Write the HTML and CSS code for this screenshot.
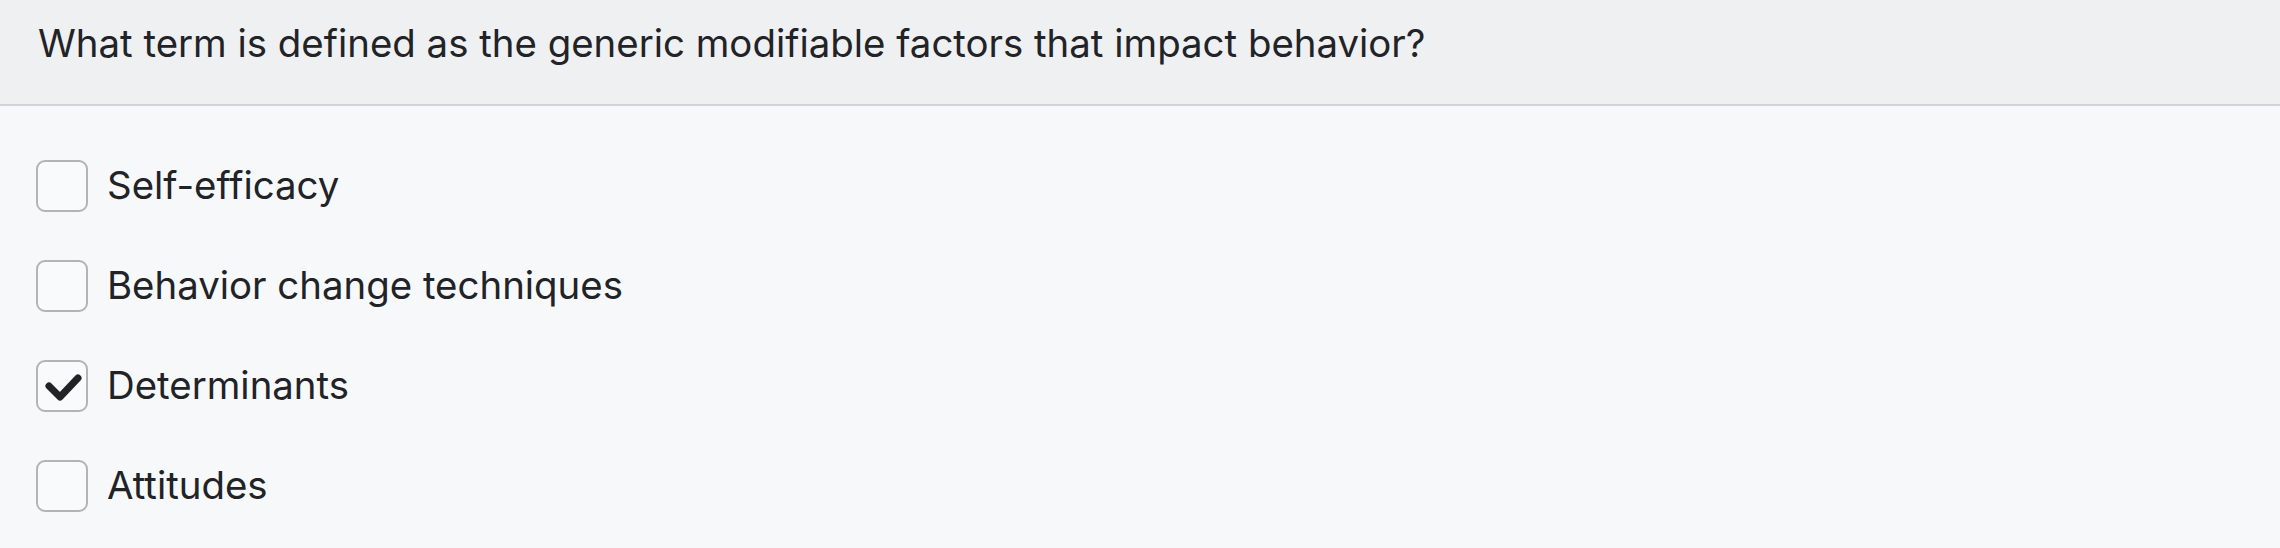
FILE: index.html
```html
<!DOCTYPE html>
<html lang="en">
<head>
<meta charset="utf-8">
<title>Question</title>
<link rel="stylesheet" href="styles.css">
</head>
<body>
<div class="question">
  <div class="question-header">What term is defined as the generic modifiable factors that impact behavior?</div>
  <ul class="options">
    <li class="option"><span class="box"></span><span class="label">Self-efficacy</span></li>
    <li class="option"><span class="box"></span><span class="label">Behavior change techniques</span></li>
    <li class="option"><span class="box checked"><svg viewBox="0 0 52 52" width="52" height="52"><path d="M13 26 L24 37 L42 18" fill="none" stroke="#222327" stroke-width="7" stroke-linecap="round" stroke-linejoin="round"/></svg></span><span class="label">Determinants</span></li>
    <li class="option"><span class="box"></span><span class="label">Attitudes</span></li>
  </ul>
</div>
</body>
</html>
```
FILE: styles.css
```css
html, body {
  margin: 0;
  padding: 0;
}
body {
  background: #f7f8fa;
  font-family: Inter, "Noto Sans", sans-serif;
  color: #212327;
  width: 2280px;
  height: 548px;
  overflow: hidden;
}
.question-header {
  background: #eff0f2;
  border-bottom: 2px solid #d2d3d6;
  box-sizing: border-box;
  height: 106px;
  padding: 20px 38px 0;
  font-size: 38.4px;
  line-height: 46px;
}
.options {
  list-style: none;
  margin: 0;
  padding: 30px 36px 0;
}
.option {
  height: 100px;
  display: flex;
  align-items: center;
  gap: 19px;
}
.box {
  width: 52px;
  height: 52px;
  box-sizing: border-box;
  border: 2px solid #b3b4b6;
  border-radius: 9px;
  background: #f9fafb;
  position: relative;
  flex: none;
}
.box svg {
  position: absolute;
  left: -2px;
  top: -2px;
}
.label {
  font-size: 38.4px;
  line-height: 46px;
  margin-top: -2px;
}
```
